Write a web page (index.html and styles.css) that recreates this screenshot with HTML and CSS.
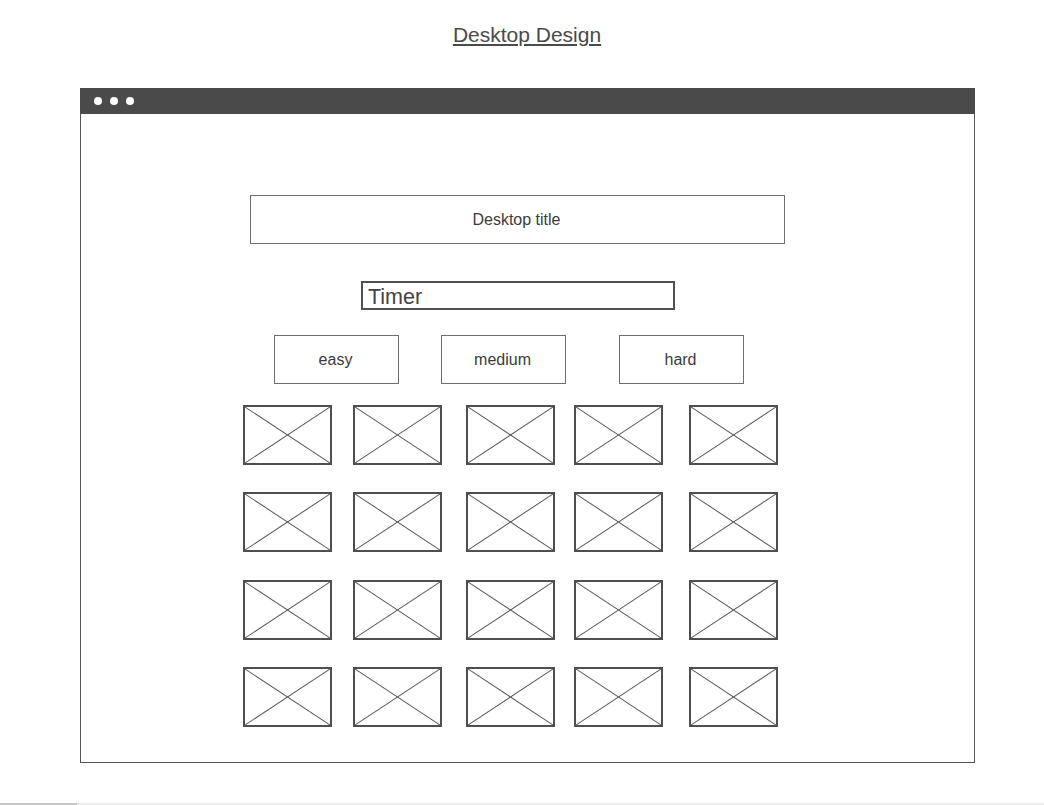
FILE: index.html
```html
<!DOCTYPE html>
<html lang="en">
<head>
    <meta charset="UTF-8">
    <meta name="viewport" content="width=device-width, initial-scale=1.0">
    <title>Desktop Design</title>
    <link rel="stylesheet" href="styles.css">
</head>
<body>

    <h1 class="page-title">Desktop Design</h1>

    <div class="window">
        <div class="window-bar">
            <span class="dot"></span>
            <span class="dot"></span>
            <span class="dot"></span>
        </div>
        <div class="window-body">
            <div class="title-box">Desktop title</div>
            <div class="timer">Timer</div>
            <div class="levels">
                <div class="level">easy</div>
                <div class="level">medium</div>
                <div class="level hard">hard</div>
            </div>
            <div class="cards" id="cards"></div>
        </div>
    </div>

    <div class="scroll-line"><span class="thumb"></span></div>

    <script>
        const cards = document.getElementById('cards');
        for (let i = 0; i < 20; i++) {
            const card = document.createElement('div');
            card.className = 'card';
            card.innerHTML = '<svg viewBox="0 0 100 100" preserveAspectRatio="none">' +
                '<line x1="0" y1="0" x2="100" y2="100" vector-effect="non-scaling-stroke" />' +
                '<line x1="100" y1="0" x2="0" y2="100" vector-effect="non-scaling-stroke" />' +
                '</svg>';
            cards.appendChild(card);
        }
    </script>

</body>
</html>
```

FILE: styles.css
```css
body {
    margin: 0;
    font-family: "Liberation Sans", Arial, sans-serif;
    color: #3b3b3b;
    background: #fff;
}
.page-title {
    margin: 0;
    padding-top: 23px;
    padding-left: 10px;
    height: 88px;
    box-sizing: border-box;
    text-align: center;
    font-size: 21px;
    font-weight: normal;
    line-height: 24px;
    color: #4a4a4a;
    text-decoration: underline;
    text-underline-offset: 2px;
}
.window {
    margin-left: 80px;
    width: 895px;
    height: 675px;
    box-sizing: border-box;
    border: 1px solid #555;
    border-top: none;
}
.window-bar {
    height: 26px;
    margin: 0 -1px;
    background-color: #4a4a4a;
    display: flex;
    align-items: center;
    gap: 8px;
    padding-left: 14px;
}
.dot {
    width: 8px;
    height: 8px;
    border-radius: 50%;
    background: #fff;
}
.window-body {
    padding-top: 81px;
}
.title-box {
    margin-left: 169px;
    width: 535px;
    height: 49px;
    box-sizing: border-box;
    border: 1px solid #6e6e6e;
    display: flex;
    align-items: center;
    justify-content: center;
    font-size: 16px;
    padding-right: 2px;
}
.timer {
    margin-top: 37px;
    margin-left: 280px;
    width: 314px;
    height: 29px;
    box-sizing: border-box;
    border: 2px solid #505050;
    font-size: 21.5px;
    line-height: 28px;
    padding-left: 5px;
    color: #444;
}
.levels {
    display: flex;
    gap: 42px;
    margin-top: 25px;
    margin-left: 193px;
}
.level {
    width: 125px;
    height: 49px;
    box-sizing: border-box;
    border: 1px solid #6e6e6e;
    display: flex;
    align-items: center;
    justify-content: center;
    font-size: 16px;
    padding-right: 2px;
}
.level.hard {
    margin-left: 11px;
}
.cards {
    display: grid;
    grid-template-columns: 110px 113px 108px 115px 89px;
    grid-auto-rows: 60px;
    row-gap: 27.3px;
    margin-top: 21px;
    margin-left: 162px;
}
.card {
    width: 89px;
    border: 2px solid #4f4f4f;
    box-sizing: border-box;
}
.card svg {
    display: block;
    width: 100%;
    height: 100%;
}
.card line {
    stroke: #555;
    stroke-width: 1;
}
.scroll-line {
    margin-top: 40px;
    height: 2px;
    background: #ececec;
}
.thumb {
    display: block;
    width: 77px;
    height: 2px;
    background: #c6c6c6;
}
```
